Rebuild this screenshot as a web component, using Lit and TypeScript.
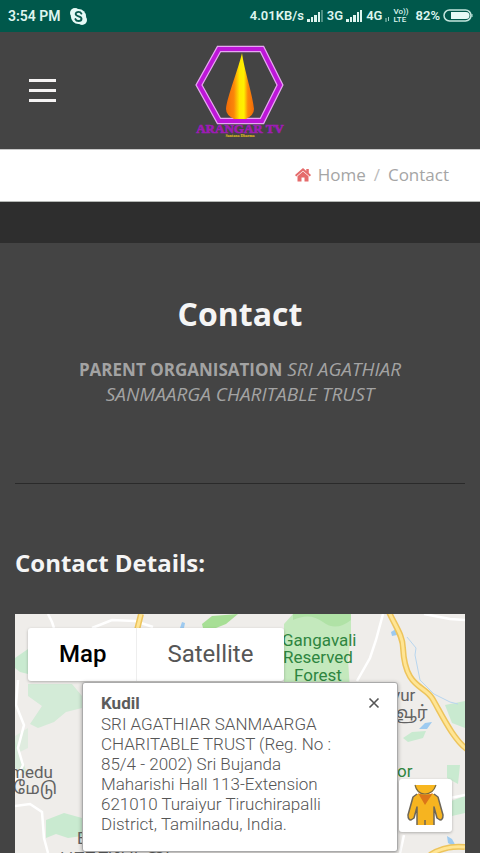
import { LitElement, html, css, svg } from "lit";
import { customElement, state } from "lit/decorators.js";

@customElement("status-bar")
class StatusBar extends LitElement {
  static styles = css`
    :host {
      display: flex;
      align-items: center;
      justify-content: space-between;
      height: 32px;
      padding: 0 7px 0 8px;
      background: #00584b;
      color: #def5ef;
      font: 600 14px/32px Roboto, sans-serif;
      white-space: nowrap;
    }
    .group {
      display: flex;
      align-items: center;
    }
    .left { gap: 9px; }
    .right { gap: 3px; font-size: 13px; }
    .battery { margin-left: 4px; }
    .volte {
      display: flex;
      flex-direction: column;
      font: 500 8px/8px Roboto, sans-serif;
    }
    svg { display: block; }
  `;

  private signal(full: boolean) {
    return html`<svg width="17" height="14" viewBox="0 0 17 14" fill="#def5ef" aria-hidden="true">
      <rect x="0" y="10" width="3" height="3" />
      <rect x="4" y="8" width="2" height="5" />
      <rect x="7" y="6" width="3" height="7" />
      <rect x="11" y="3" width="2" height="10" />
      <rect x="14" y="1" width="2" height="12" opacity=${full ? 1 : 0.35} />
    </svg>`;
  }

  render() {
    return html`
      <div class="group left">
        <span>3:54 PM</span>
        <svg width="17" height="17" viewBox="0 0 17 17" aria-hidden="true">
          <circle cx="5" cy="5" r="5" fill="#e6faf6" />
          <circle cx="12" cy="12" r="5" fill="#e6faf6" />
          <circle cx="8.5" cy="8.5" r="7.6" fill="#e6faf6" />
          <path d="M11.4 5.6C10.7 4.2 9.700 3.900 8.500 3.900C6.900 3.900 5.700 4.700 5.700 6.100C5.700 9 11.500 7.700 11.500 10.700C11.500 12.200 10.200 13 8.600 13C7 13 5.900 12.500 5.400 11.100" fill="none" stroke="#0b5b50" stroke-width="1.900" stroke-linecap="round" />
        </svg>
      </div>
      <div class="group right">
        <span>4.01KB/s</span>
        ${this.signal(false)}
        <span>3G</span>
        ${this.signal(true)}
        <span>4G</span>
        <svg width="5" height="14" viewBox="0 0 5 14" stroke="#a5d3c9" fill="none" aria-hidden="true">
          <path d="M1 9v4M3.500 8v4" />
        </svg>
        <span class="volte"><span>Vo))</span><span>LTE</span></span>
        <span class="battery">82%</span>
        <svg width="30" height="14" viewBox="0 0 30 14" aria-hidden="true">
          <rect x="1" y="1" width="27" height="11" rx="5.500" fill="none" stroke="#c4e6de" stroke-width="1.500" />
          <path d="M8 3H23a3.500 3.500 0 0 1 0 7H8z" fill="#e6faf6" />
          <path d="M29 5v3" stroke="#c4e6de" />
        </svg>
      </div>
    `;
  }
}

@customElement("site-header")
class SiteHeader extends LitElement {
  static styles = css`
    :host {
      display: grid;
      grid-template-columns: 1fr auto 1fr;
      align-items: center;
      height: 117px;
      padding: 0 28px;
      box-sizing: border-box;
      background: #444;
    }
    .menu {
      display: flex;
      flex-direction: column;
      justify-self: start;
      gap: 7px;
      padding: 0 1px;
      border: 0;
      background: none;
    }
    .bar {
      width: 27px;
      height: 3px;
      background: #f5f3f3;
    }
    .logo, .logo svg { display: block; }
    .name { font: bold 13px "Liberation Serif", serif; }
    .tag { font: bold 4px "Liberation Serif", serif; }
  `;

  render() {
    return html`
      <button class="menu" aria-label="Menu">
        <span class="bar"></span><span class="bar"></span><span class="bar"></span>
      </button>
      <a class="logo" href="#" aria-label="Arangar TV">
        <svg width="92" height="97" viewBox="0 0 92 97">
          <defs>
            <linearGradient id="flame">
              <stop offset="0" stop-color="#f06a08" />
              <stop offset=".28" stop-color="#fb860a" />
              <stop offset=".48" stop-color="#ffe900" />
              <stop offset=".64" stop-color="#fff000" />
              <stop offset=".78" stop-color="#fb860a" />
              <stop offset="1" stop-color="#f06a08" />
            </linearGradient>
          </defs>
          <path d="M25 7H68L86 43 68 79H25L5 43Z" fill="none" stroke="#e7a6f3" stroke-width="6.500" />
          <path d="M25 7H68L86 43 68 79H25L5 43Z" fill="none" stroke="#bd16d8" stroke-width="4" />
          <path d="M48 11C50 27 59 54 60 67Q60 73 52 77H40Q32 73 32 67C33 55 45 25 48 11Z" fill="url(#flame)" />
          <text class="name" x="46" y="91" text-anchor="middle" fill="#9d1cb4" stroke="#9d1cb4" stroke-width=".7">ARANGAR TV</text>
          <text class="tag" x="46" y="95" text-anchor="middle" fill="#e5c41c">Santana Dharma</text>
        </svg>
      </a>
    `;
  }
}

@customElement("bread-crumbs")
class BreadCrumbs extends LitElement {
  static styles = css`
    :host {
      display: block;
      background: #fff;
      border-top: 1px solid #c8c8c8;
      border-bottom: 1px solid #b5b8b5;
      font: 17px/50px "Open Sans", sans-serif;
      color: #a5a5a5;
    }
    nav {
      display: flex;
      align-items: center;
      justify-content: flex-end;
      padding: 0 31px 1px;
    }
    a { color: inherit; text-decoration: none; }
    .home { display: flex; align-items: center; gap: 7px; }
    .slash { padding: 0 8px; color: #bbb; }
  `;

  render() {
    return html`<nav aria-label="Breadcrumb">
      <a class="home" href="#">
        <svg width="16" height="14" viewBox="0 0 16 14" fill="#e56b6b" aria-hidden="true">
          <path d="M8 0 0 7 1.200 8.600 8 2.800 14.800 8.600 16 7 13.800 5V1H11.300V2.900Z" />
          <path d="M8 3.600 2.500 8.200V13.500H6.500V9.500H9.500V13.500H13.500V8.200Z" />
        </svg>
        Home</a>
      <span class="slash">/</span>
      <span>Contact</span>
    </nav>`;
  }
}

@customElement("contact-map")
class ContactMap extends LitElement {
  @state() private view = "Map";

  static styles = css`
    :host {
      display: block;
      position: relative;
      overflow: hidden;
      background: #efedea;
      font-family: Roboto, sans-serif;
    }
    .tiles {
      position: absolute;
      inset: 0;
      width: 100%;
      height: 100%;
    }
    .place { font: 17px Roboto, "Noto Sans Tamil", sans-serif; fill: #626262; }
    .park { font: 17px Roboto, sans-serif; fill: #2e8540; }
    .types {
      position: absolute;
      left: 13px;
      top: 14px;
      display: flex;
      padding: 0 1px;
      border-radius: 3px;
      background: #fff;
      box-shadow: 0 1px 3px #0004;
    }
    .type {
      padding: 0 30px;
      border: 0;
      background: none;
      color: #565656;
      font: 24px/53px Roboto, sans-serif;
    }
    .type + .type { border-left: 1px solid #eee; }
    .type.on { color: #000; font-weight: 500; }
    .info {
      position: absolute;
      left: 67px;
      top: 68px;
      width: 316px;
      box-sizing: border-box;
      padding: 10px 50px 17px 18px;
      border: 1px solid #aaa;
      border-radius: 3px;
      background: #fff;
      box-shadow: 0 1px 4px #0005;
      color: #555;
      font-size: 17px;
      font-weight: 300;
      line-height: 20px;
    }
    .info h3 {
      margin: 0;
      color: #5c5c5c;
      font-size: 17px;
      line-height: 21px;
      font-weight: 700;
    }
    .info p { margin: 0; }
    .close {
      position: absolute;
      right: 17px;
      top: 14px;
      padding: 0;
      border: 0;
      background: none;
    }
    .close svg, .pegman svg { display: block; }
    .pegman {
      position: absolute;
      right: 13px;
      top: 165px;
      padding: 5px 7px;
      border: 0;
      border-radius: 3px;
      background: #fff;
      box-shadow: 0 1px 3px #0004;
    }
  `;

  private tiles() {
    return svg`
      <g fill="#c9ead0">
        <path d="M293 614H351V632L348 660 350 690H284V624Z" fill="#c4e9bd" />
        <path d="M293 620Q310 612 323 622T351 620V614H293Z" fill="#b0e2a6" />
        <path d="M202 624 212 616 238 614 226 624 216 628H203Z" fill="#a7df95" />
        <path d="M15 736 28 728V748L20 752 15 748Z" opacity=".4" />
        <path d="M28 684H72L82 696V708L66 712 54 722 38 728 30 724 42 706 28 696Z" opacity=".75" />
        <path d="M15 740 24 764 27 774 15 768Z" opacity=".6" />
        <path d="M46 820 64 813 82 818V836L68 838 56 834 46 838Z" />
        <path d="M15 658 28 649V674L20 672 15 668Z" />
        <path d="M445 705 465 701V728L452 723Z" />
        <path d="M403 738 412 732 426 731 423 738 408 742Z" />
        <path d="M447 765H460L458 784 447 778Z" />
        <path d="M451 801 465 796V813L452 816Z" />
      </g>
      <g fill="none" stroke="#fff" stroke-width="2.500">
        <path d="M48 614 52 622 54 628M92 628 112 620 135 621 153 627" />
        <path d="M383 614 376 640 370 658 357 681M424 614 450 619 465 620" />
        <path d="M18 680 16 705 24 725 18 748 23 765 15 782M15 806 30 804 42 812 44 838 48 853M465 795 450 798M404 835 400 853" />
      </g>
      <g fill="none" stroke="#b8d6ef" stroke-width="1">
        <path d="M407 637 416 648 415 655 420 680 434 694 450 702 458 704" />
      </g>
      <g fill="#9dcaf0">
        <path d="M391 632 396 629 397 635 392 636ZM419 729 425 723 432 722 427 729ZM447 836 452 839 457 848 448 843ZM180 628 182 622 185 623 184 628Z" />
      </g>
      <g fill="none">
        <path d="M389 612C394 624 403 635 403 648C405 688 424 685 432 698S453 740 468 750M430 855Q445 845 465 847M141 614 137 630" stroke="#edc45c" stroke-width="6" />
        <path d="M389 612C394 624 403 635 403 648C405 688 424 685 432 698S453 740 468 750M430 855Q445 845 465 847M141 614 137 630" stroke="#ffe594" stroke-width="3" />
      </g>
      <g class="park">
        <text x="282" y="646">Gangavali</text>
        <text x="283" y="663">Reserved</text>
        <text x="294" y="681">Forest</text>
        <text x="397" y="777">or</text>
      </g>
      <g class="place">
        <text x="10" y="778">medu</text>
        <text x="13" y="794">மேடு</text>
        <text x="392" y="701">vur</text>
        <text x="396" y="718">வூர்</text>
        <text x="77" y="844">E</text>
        <text x="60" y="861">பாதர்பேட்டை</text>
      </g>`;
  }

  render() {
    return html`
      <svg class="tiles" viewBox="15 614 450 239" preserveAspectRatio="xMidYMin slice" aria-hidden="true">
        ${this.tiles()}
      </svg>
      <div class="types">
        ${["Map", "Satellite"].map(
          (t) => html`<button class="type ${t === this.view ? "on" : ""}" @click=${() => (this.view = t)}>${t}</button>`
        )}
      </div>
      <div class="info">
        <button class="close" aria-label="Close">
          <svg width="12" height="12" viewBox="0 0 12 12"><path d="M1.500 1.500 10.500 10.500M10.500 1.500 1.500 10.500" stroke="#555" stroke-width="1.600" /></svg>
        </button>
        <h3>Kudil</h3>
        <p>SRI AGATHIAR SANMAARGA CHARITABLE TRUST (Reg. No : 85/4 - 2002) Sri Bujanda Maharishi Hall 113-Extension 621010 Turaiyur Tiruchirapalli District, Tamilnadu, India.</p>
      </div>
      <button class="pegman" aria-label="Street View">
        <svg width="39" height="43" viewBox="0 0 39 43">
          <path d="M11 10H28L32 13 37 31Q37 36 34 36L31 34 28 23V41H11V23L8 34 5 36Q2 36 2 31L7 13Z" fill="#f6b420" />
          <path d="M11 41V23L8 34 5 36Q2 36 2 31L7 13 11 10M28 10 32 13 37 31Q37 36 34 36L31 34 28 23V41" fill="none" stroke="#6d6658" stroke-width="1.500" stroke-linejoin="round" />
          <path d="M9 1H30Q27 10 19 10T9 1Z" fill="#f8b720" />
          <path d="M9 1Q11 10 19 10T30 1" fill="none" stroke="#7c6a3c" stroke-width="1.200" />
          <path d="M12 9Q19 13 27 9L19 21Z" fill="#dc7519" />
          <path d="M19 36V41" stroke="#6d6658" stroke-width="1.500" />
        </svg>
      </button>
    `;
  }
}

@customElement("app-root")
class AppRoot extends LitElement {
  static styles = css`
    :host {
      display: flex;
      flex-direction: column;
      min-height: 100vh;
      background: #444;
      color: #f5f5f5;
      font-family: "Open Sans", sans-serif;
    }
    .band { height: 41px; background: #2e2e2e; }
    main {
      flex: 1;
      display: flex;
      flex-direction: column;
      padding: 0 15px;
    }
    .intro {
      padding: 46px 56px 76px;
      border-bottom: 1px solid #2a2a2a;
      text-align: center;
    }
    h1 {
      margin: 0 0 18px;
      font-size: 32px;
      line-height: 50px;
      font-weight: 700;
    }
    .intro p {
      margin: 0;
      color: #a3a3a3;
      font-size: 19px;
      line-height: 25px;
    }
    .intro strong { font-size: 17px; }
    h2 {
      margin: 62px 0 34px;
      font-size: 24px;
      line-height: 34px;
      font-weight: 700;
    }
    contact-map { flex: 1; min-height: 239px; }
  `;

  render() {
    return html`
      <status-bar></status-bar>
      <site-header></site-header>
      <bread-crumbs></bread-crumbs>
      <div class="band"></div>
      <main>
        <section class="intro">
          <h1>Contact</h1>
          <p><strong>PARENT ORGANISATION</strong> <em>SRI AGATHIAR SANMAARGA CHARITABLE TRUST</em></p>
        </section>
        <h2>Contact Details:</h2>
        <contact-map></contact-map>
      </main>
    `;
  }
}
